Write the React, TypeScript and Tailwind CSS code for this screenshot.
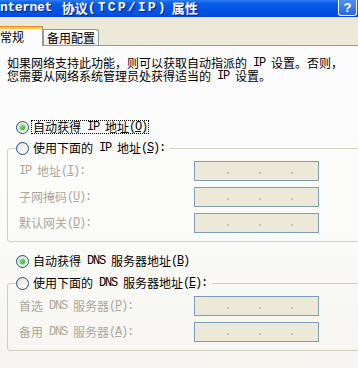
import React from "react";

const MONO = "font-['Liberation_Mono',monospace] tracking-[-1.2px]";

// ascii runs get the narrow mono face so they take 6px a char, like SimSun
function Txt({ s }: { s: string }) {
  const parts = s.split(/([ -~]+)/).filter(Boolean);
  return (
    <>
      {parts.map((p, i) =>
        /^[ -~]+$/.test(p) ? (
          <span key={i} className={`${MONO} whitespace-pre`}>
            {p}
          </span>
        ) : (
          <span key={i}>{p}</span>
        )
      )}
    </>
  );
}

function Label({ text }: { text: string }) {
  const i = text.indexOf("&");
  if (i < 0) return <Txt s={text} />;
  return (
    <>
      <Txt s={text.slice(0, i)} />
      <u className={MONO}>{text[i + 1]}</u>
      <Txt s={text.slice(i + 2)} />
    </>
  );
}

function Radio({ checked }: { checked?: boolean }) {
  return (
    <span className="w-[13px] h-[13px] shrink-0 rounded-full border border-[#1c5180] bg-[linear-gradient(135deg,#dcd9cc,#ffffff_75%)] flex items-center justify-center">
      {checked && (
        <span className="w-[5px] h-[5px] rounded-full bg-[radial-gradient(circle_at_35%_35%,#7ee27b,#21a121)] shadow-[0_0_1px_1px_#a6e5a4]" />
      )}
    </span>
  );
}

function IpBox() {
  return (
    <div className="w-[125px] h-[20px] shrink-0 border border-[#7f9db9] bg-[#ece9d8] flex items-center pl-[32px] gap-[30px]">
      {[0, 1, 2].map((i) => (
        <span key={i} className="w-[2px] h-[2px] mt-[4px] bg-[#c6c3b5]" />
      ))}
    </div>
  );
}

function Field({ label }: { label: string }) {
  return (
    <div className="flex items-center h-[20px] overflow-hidden">
      <span className="w-[175px] h-[14px] flex items-center text-[#aca899] whitespace-nowrap leading-[14px]">
        <Label text={label} />
      </span>
      <IpBox />
    </div>
  );
}

function Group({ legend, fields, className }: { legend: string; fields: string[]; className: string }) {
  return (
    <fieldset className={`ml-[7px] w-[400px] border border-[#d0d0bf] rounded-[3px] ${className}`}>
      <legend className="ml-[8px] pr-[5px] h-[14px] overflow-hidden flex items-center gap-[4px] whitespace-nowrap leading-[14px]">
        <Radio />
        <span className="h-[14px] flex items-center">
          <Label text={legend} />
        </span>
      </legend>
      <div className="pl-[11px] pt-[6px] pb-[8px] flex flex-col gap-[6px]">
        {fields.map((f) => (
          <Field key={f} label={f} />
        ))}
      </div>
    </fieldset>
  );
}

export default function App() {
  return (
    <div className="w-[358px] h-[368px] overflow-hidden bg-[#ece9d8] font-['Noto_Sans_CJK_SC',sans-serif] text-[12px] text-black">
      {/* title bar */}
      <div className="h-[17px] flex items-start justify-between bg-[linear-gradient(to_bottom,#2a7cf6_0%,#0a5de8_20%,#0054e3_55%,#0050dc_85%,#0047cc_100%)]">
        <div className="h-[15px] flex items-center text-white font-bold text-[13px] whitespace-nowrap [text-shadow:1px_1px_#0a1e8a]">
          <span className="font-['Liberation_Mono',monospace] tracking-[-0.4px]">nternet</span>
          <span className="ml-[10px]">协议</span>
          <span className="font-['Liberation_Mono',monospace] tracking-[2.2px]">(TCP/IP)</span>
          <span className="ml-[4px]">属性</span>
        </div>
        <div className="mr-[1px] w-[19px] h-[16px] border border-t-0 border-white rounded-b-[3px] bg-[linear-gradient(to_bottom,#4f8ff5,#2a66e3)] flex items-center justify-center text-white font-bold text-[13px] font-['Liberation_Sans',sans-serif] leading-none">
          ?
        </div>
      </div>

      {/* tabs */}
      <div className="h-[28px] flex items-end">
        <div className="relative z-10 w-[43px] h-[20px] mb-[-1px] border-r border-[#919b9c] bg-[#fcfcfe] flex flex-col">
          <div className="h-[1px] bg-[#e68b2c]" />
          <div className="h-[2px] bg-[#ffc73c]" />
          <div className="flex-1 flex items-center pb-[2px] leading-[14px]">常规</div>
        </div>
        <div className="w-[56px] h-[16px] border border-b-0 border-[#919b9c] rounded-tr-[3px] bg-[linear-gradient(to_bottom,#ffffff,#ecebe6)] flex items-center justify-center leading-[14px]">
          备用配置
        </div>
      </div>

      {/* tab page */}
      <div className="h-[400px] border-t border-[#919b9c] bg-[linear-gradient(to_bottom,#fcfcfe_0%,#fbfbf9_45%,#f4f3ee_90%)]">
        <div className="pt-[10px] pl-[7px] whitespace-nowrap">
          <div className="h-[13px] flex items-center">
            <Txt s="如果网络支持此功能，则可以获取自动指派的 IP 设置。否则，" />
          </div>
          <div className="h-[13px] flex items-center">
            <Txt s="您需要从网络系统管理员处获得适当的 IP 设置。" />
          </div>
        </div>

        <div className="mt-[38px] pl-[16px] h-[14px] flex items-center gap-[2px] whitespace-nowrap">
          <Radio checked />
          <span className="h-[14px] flex items-center border border-dotted border-black px-[1px]">
            <Label text="自动获得 IP 地址(&O)" />
          </span>
        </div>

        <Group
          className="mt-[7px]"
          legend="使用下面的 IP 地址(&S):"
          fields={["IP 地址(&I):", "子网掩码(&U):", "默认网关(&D):"]}
        />

        <div className="mt-[12px] pl-[16px] h-[14px] flex items-center gap-[4px] whitespace-nowrap">
          <Radio checked />
          <span className="h-[14px] flex items-center">
            <Label text="自动获得 DNS 服务器地址(&B)" />
          </span>
        </div>

        <Group
          className="mt-[8px]"
          legend="使用下面的 DNS 服务器地址(&E):"
          fields={["首选 DNS 服务器(&P):", "备用 DNS 服务器(&A):"]}
        />
      </div>
    </div>
  );
}
